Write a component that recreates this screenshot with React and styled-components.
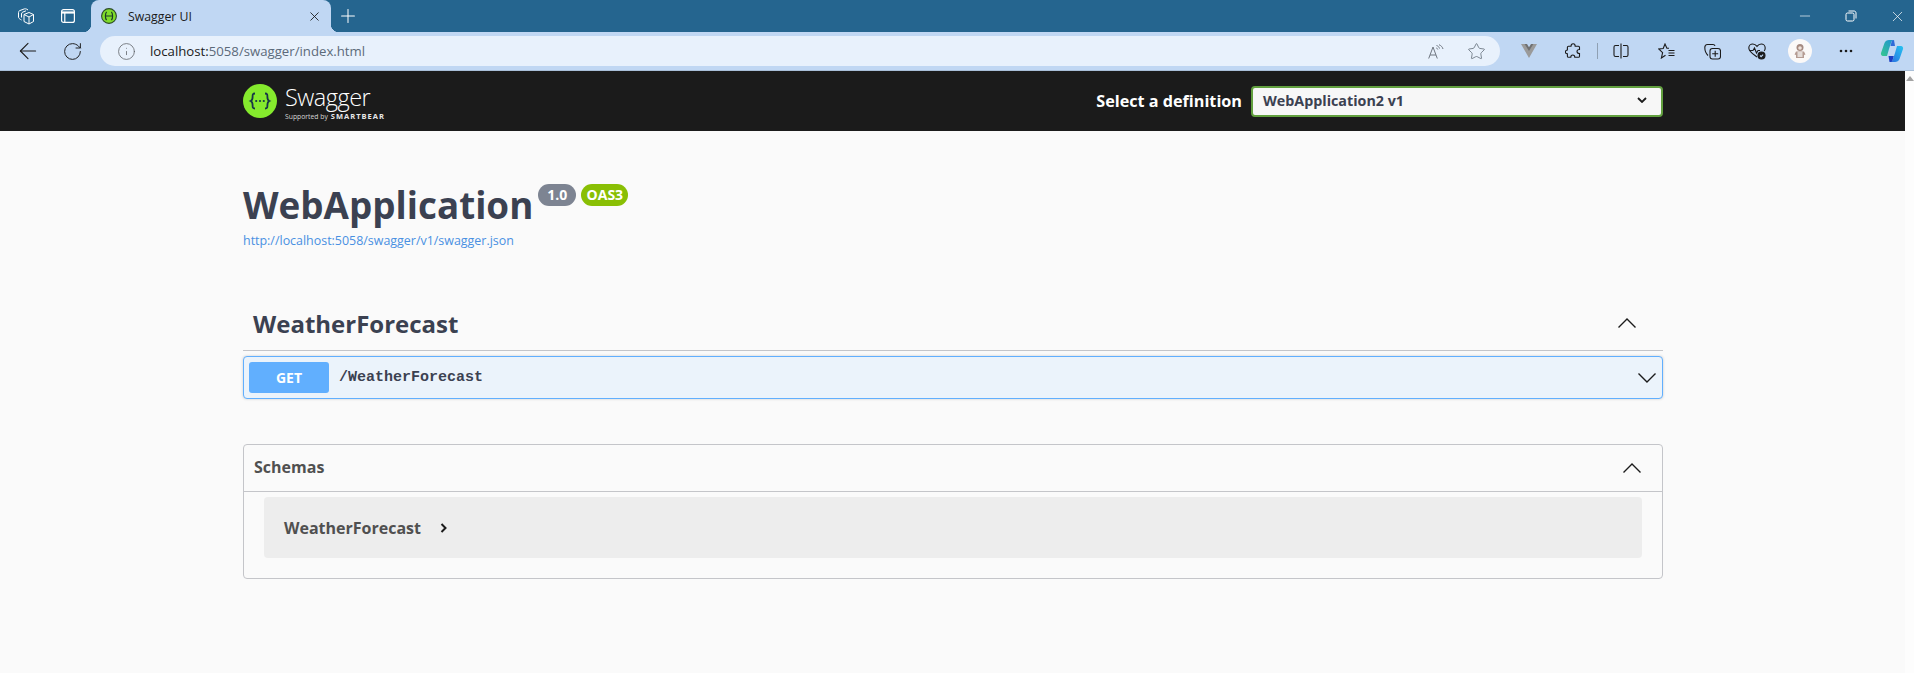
import React from 'react';
import styled, { createGlobalStyle } from 'styled-components';
import { ArrowLeft, RotateCw, Info, Star, X, Plus, Minus } from 'lucide-react';

const GlobalStyle = createGlobalStyle`
  html, body { margin: 0; padding: 0; background: #fafafa; overflow: hidden; }
  * { box-sizing: border-box; }
  body { font-family: "Open Sans", "Noto Sans", sans-serif; }
`;

const Window = styled.div`
  width: 1914px;
  height: 673px;
  display: flex;
  flex-direction: column;
  overflow: hidden;
`;

const TabStrip = styled.div`
  height: 32px;
  background: #25658f;
  display: flex;
  align-items: stretch;
  color: #fff;
`;

const StripSlot = styled.div`
  width: ${({ $w }) => $w}px;
  flex: none;
  display: flex;
  align-items: center;
  justify-content: center;
`;

const Tab = styled.div`
  position: relative;
  width: 240px;
  flex: none;
  background: #c0d7f3;
  border-radius: 8px 8px 0 0;
  display: flex;
  align-items: center;
  padding: 0 9px 0 10px;
  color: #1b1b1b;
  font-size: 12.3px;

  &::before, &::after {
    content: '';
    position: absolute;
    bottom: 0;
    width: 8px;
    height: 8px;
  }
  &::before { left: -8px; background: radial-gradient(circle at 0 0, #25658f 8px, #c0d7f3 8.5px); }
  &::after { right: -8px; background: radial-gradient(circle at 100% 0, #25658f 8px, #c0d7f3 8.5px); }
`;

const TabTitle = styled.span`
  flex: 1;
  margin-left: 11px;
  white-space: nowrap;
`;

const Spacer = styled.div`
  flex: 1;
`;

const Toolbar = styled.div`
  height: 39px;
  background: #c0d7f3;
  border-bottom: 1px solid #a9bfd8;
  display: flex;
  align-items: center;
  flex: none;
`;

const AddressBar = styled.div`
  width: 1400px;
  height: 30px;
  flex: none;
  background: #e8f1fc;
  border-radius: 15px;
  display: flex;
  align-items: center;
  font-size: 13.2px;
  color: #5c6a7a;
`;

const AddressHost = styled.span`
  color: #1b1b1b;
`;

const AddressUrl = styled.div`
  flex: 1;
  white-space: nowrap;
  margin-left: -2px;
`;

const Separator = styled.div`
  width: 1px;
  height: 16px;
  background: #8fa0b3;
  flex: none;
`;

const Avatar = styled.div`
  width: 24px;
  height: 24px;
  border-radius: 50%;
  background: #fbf9f8;
  display: flex;
  align-items: center;
  justify-content: center;
`;

const Viewport = styled.div`
  flex: 1;
  display: flex;
  min-height: 0;
`;

const Page = styled.div`
  flex: 1;
  min-width: 0;
  background: #fafafa;
`;

const Scrollbar = styled.div`
  width: 9px;
  flex: none;
  background: #fdfdfd;
  display: flex;
  justify-content: center;
  padding-top: 5px;
`;

const TopArrow = styled.div`
  width: 0;
  height: 0;
  border-left: 4px solid transparent;
  border-right: 4px solid transparent;
  border-bottom: 5px solid #a3a3a3;
`;

const Topbar = styled.header`
  height: 60px;
  background: #1b1b1b;
  padding: 0 242px 0 243px;
  display: flex;
  align-items: center;
  justify-content: space-between;
`;

const Logo = styled.div`
  display: flex;
  align-items: center;
  gap: 8px;
  color: #fff;
`;

const LogoText = styled.div`
  display: flex;
  flex-direction: column;
  padding-top: 1px;
`;

const LogoName = styled.span`
  font-size: 23.5px;
  font-weight: 300;
  line-height: 30px;
  letter-spacing: -0.5px;
`;

const LogoSupport = styled.span`
  display: flex;
  align-items: baseline;
  gap: 3px;
  font-size: 6.8px;
  line-height: 9px;
  white-space: nowrap;
  color: #d6d6d6;
`;

const LogoBear = styled.b`
  font-size: 7.5px;
  letter-spacing: 1px;
  color: #e8e8e8;
`;

const Definition = styled.div`
  display: flex;
  align-items: center;
  gap: 9px;
`;

const DefinitionLabel = styled.span`
  color: #fff;
  font-size: 16.2px;
  font-weight: 700;
`;

const SelectBox = styled.div`
  width: 412px;
  height: 31px;
  border: 2px solid #62a03f;
  border-radius: 4px;
  background: #f7f7f7;
  color: #3b4151;
  font-size: 14.3px;
  font-weight: 700;
  display: flex;
  align-items: center;
  justify-content: space-between;
  padding: 0 14px 2px 10px;
`;

const Content = styled.main`
  padding: 0 242px 0 243px;
`;

const InfoBlock = styled.section`
  padding-top: 50px;
`;

const TitleRow = styled.div`
  display: flex;
  align-items: flex-start;
`;

const Title = styled.h1`
  margin: 0;
  font-size: 36.8px;
  font-weight: 700;
  line-height: 49px;
  color: #3b4151;
`;

const Badge = styled.span`
  height: 22px;
  margin: 3px 0 0 ${({ $gap }) => $gap}px;
  width: ${({ $w }) => $w}px;
  text-align: center;
  border-radius: 11px;
  background: ${({ $bg }) => $bg};
  color: #fff;
  font-size: 14px;
  font-weight: 700;
  line-height: 22px;
`;

const SpecLink = styled.a`
  display: block;
  margin-top: 3px;
  font-size: 12.45px;
  line-height: 16px;
  color: #4990e2;
`;

const TagHeader = styled.div`
  margin-top: 46px;
  height: 56px;
  padding: 0 27px 0 10px;
  border-bottom: 1px solid #c4c5c9;
  display: flex;
  align-items: center;
  justify-content: space-between;
`;

const TagName = styled.h3`
  margin: 2px 0 0;
  font-size: 24px;
  font-weight: 700;
  color: #3b4151;
`;

const Operation = styled.div`
  margin-top: 5px;
  height: 43px;
  border: 1px solid #61affe;
  border-radius: 4px;
  background: #ebf3fb;
  box-shadow: 0 0 3px rgba(0, 0, 0, 0.19);
  padding: 5px 6px 5px 5px;
  display: flex;
  align-items: center;
`;

const Method = styled.span`
  width: 80px;
  height: 31px;
  border-radius: 3px;
  background: #61affe;
  color: #fff;
  font-size: 14px;
  font-weight: 700;
  display: flex;
  align-items: center;
  justify-content: center;
`;

const OperationPath = styled.span`
  flex: 1;
  margin-left: 10px;
  font-family: "Liberation Mono", monospace;
  font-size: 15px;
  font-weight: 700;
  color: #3b4151;
`;

const SchemaSection = styled.section`
  margin-top: 45px;
  height: 135px;
  border: 1px solid #c4c5c9;
  border-radius: 4px;
`;

const SchemaHeader = styled.div`
  height: 47px;
  padding: 0 21px 0 10px;
  border-bottom: 1px solid #c4c5c9;
  display: flex;
  align-items: center;
  justify-content: space-between;
`;

const SchemaTitle = styled.h4`
  margin: 0 0 3px;
  font-size: 16px;
  font-weight: 700;
  color: #505050;
`;

const SchemaBody = styled.div`
  padding: 5px 20px 15px;
`;

const SchemaRow = styled.div`
  height: 61px;
  border-radius: 4px;
  background: #ededed;
  padding: 0 20px;
  display: flex;
  align-items: center;
  gap: 19px;
  font-size: 16px;
  font-weight: 700;
  color: #505050;
`;

// section arrows, drawn tight to their box so padding lines up
const BigChevron = ({ up }) => (
  <svg width="18" height="10" viewBox="0 0 18 10" fill="none" stroke="#1b1b1b" strokeWidth="1.4">
    <path d={up ? 'M.5 9.500L9 1l8.500 8.500' : 'M.5.5L9 9l8.500-8.500'} />
  </svg>
);

const Workspaces = () => (
  <svg width="18" height="18" viewBox="0 0 18 18" fill="none" stroke="#fff" strokeWidth="1">
    <path d="M7 7.500l5-2 4.500 2v7l-4.500 2.500-5-2.500z" />
    <path d="M12 17v-7l4.500-2.500M7 7.500l5 2.500" />
    <path d="M4.500 13l-1-.5c-1-.6-2-1.500-2-2.500V5.500c0-1 .6-1.700 1.500-2l4-1.500c1-.4 2-.2 3 .3l1 .7" />
    <path d="M4.500 10.500V7c0-1 .5-1.500 1.300-1.900L9 3.800" />
  </svg>
);

const TabActions = () => (
  <svg width="16" height="16" viewBox="0 0 16 16" fill="none" stroke="#fff" strokeWidth="1.2">
    <rect x="1.600" y="1.600" width="12.800" height="12.800" rx="2" />
    <path d="M2 4.500h12" strokeWidth="2.200" />
    <path d="M4.800 5v9" />
  </svg>
);

const Favicon = () => (
  <svg width="16" height="16" viewBox="0 0 16 16">
    <circle cx="8" cy="8" r="7.400" fill="#7fdc2b" stroke="#2d4a2b" strokeWidth="1.100" />
    <path d="M5.600 3.800C4 5.600 4 10.400 5.600 12.200M10.400 3.800c1.600 1.800 1.600 6.600 0 8.400M5 8h6" fill="none" stroke="#1c3a2a" strokeWidth="1.200" />
  </svg>
);

const SwaggerMark = () => (
  <svg width="34" height="34" viewBox="0 0 34 34">
    <circle cx="17" cy="17" r="17" fill="#85ea2d" />
    <path
      d="M12 9.500c-2.600 0-2.400 1.600-2.400 3.400 0 2-.4 3.400-1.900 4.100 1.500.7 1.900 2.100 1.900 4.100 0 1.800-.2 3.400 2.400 3.400M22 9.500c2.600 0 2.400 1.600 2.400 3.400 0 2 .4 3.400 1.900 4.100-1.500.7-1.900 2.100-1.900 4.100 0 1.800.2 3.400-2.400 3.400"
      fill="none"
      stroke="#173647"
      strokeWidth="1.800"
    />
    <circle cx="13.200" cy="17" r="1.100" fill="#173647" />
    <circle cx="17" cy="17" r="1.100" fill="#173647" />
    <circle cx="20.800" cy="17" r="1.100" fill="#173647" />
  </svg>
);

const ReadAloud = () => (
  <svg width="16" height="15" viewBox="0 0 16 15" fill="none" stroke="#6f7680" strokeWidth="1">
    <path d="M.7 14.500L5 3l4.300 11.500M2 11h6" />
    <path d="M8.500 1.500c1.500.4 2.600 1.500 3 3M8.300 4c.8.2 1.300.7 1.500 1.500M11 .7c2.200.9 3.500 2.400 4 4.300" />
  </svg>
);

const VueMark = () => (
  <svg width="16" height="14" viewBox="0 0 16 14">
    <path d="M0 0h4.600L8 5.400 11.400 0H16L8 14z" fill="#9a9a9a" />
    <path d="M3.600 0h2.400L8 3.200 10 0h2.400L8 7z" fill="#6f7072" />
  </svg>
);

const Puzzle = () => (
  <svg width="16" height="16" viewBox="0 0 16 16" fill="none" stroke="#1b1b1b" strokeWidth="1.100">
    <path d="M6 3.200C6 1.600 7 .8 8.200.8s2 .9 2 2.400h3.200c.7 0 1.100.4 1.100 1.100v2.200c-1.400 0-2.500.7-2.500 2s1.100 2 2.500 2v2.700c0 .7-.4 1.100-1.100 1.100H9.800c0-1.300-.7-2.300-2-2.300s-2 1-2 2.300H3.500c-.7 0-1.100-.4-1.100-1.100v-2.400c-1.300 0-2-.8-2-1.900s.7-1.900 2-1.900V4.300c0-.7.4-1.100 1.100-1.100z" />
  </svg>
);

const SplitScreen = () => (
  <svg width="16" height="16" viewBox="0 0 16 16" fill="none" stroke="#1b1b1b" strokeWidth="1.100">
    <path d="M6 2.500H2.500c-.9 0-1.500.6-1.500 1.500v8c0 .9.6 1.500 1.500 1.500H6M10 2.500h3.500c.9 0 1.500.6 1.500 1.500v8c0 .9-.6 1.500-1.500 1.500H10M8 .5v15" />
  </svg>
);

const Favorites = () => (
  <svg width="17" height="16" viewBox="0 0 17 16" fill="none" stroke="#1b1b1b" strokeWidth="1.100">
    <path d="M7.500 12.200L3.400 15l1.200-5.400L.8 6l4.400-.5L7 1l1.900 4.200 2.100.1" />
    <path d="M10.500 7.500h6M10.500 10h6M10.500 12.500h6" />
  </svg>
);

const Collections = () => (
  <svg width="17" height="17" viewBox="0 0 17 17" fill="none" stroke="#1b1b1b" strokeWidth="1.100">
    <path d="M4 12.500C2.500 11 .8 7 .8 4.500 .8 2.500 2 1.500 3.500 1.500H9c1 0 1.800.6 2 1.500" />
    <rect x="6" y="5.500" width="10.500" height="10.500" rx="2.500" />
    <path d="M11.200 7.800v6M8.200 10.800h6" />
  </svg>
);

const Health = () => (
  <svg width="18" height="17" viewBox="0 0 18 17" fill="none" stroke="#1b1b1b" strokeWidth="1.100">
    <path d="M9 14C5 11 .8 8.500.8 5 .8 2.800 2.600 1 4.800 1 6.400 1 8 2 9 3.300 10 2 11.600 1 13.200 1c2.200 0 4 1.800 4 4 0 1.200-.4 2.200-1 3" />
    <path d="M1.500 7.500h3.500l1.500-2.500 2 5 1.500-2.500h2" />
    <circle cx="13.500" cy="12.500" r="3.500" fill="#1b1b1b" />
    <path d="M12 12.500l1.100 1.100 2-2" stroke="#c0d7f3" />
  </svg>
);

const AvatarFigure = () => (
  <svg width="14" height="16" viewBox="0 0 14 16">
    <circle cx="7" cy="4.500" r="3.500" fill="#a58a80" />
    <circle cx="7" cy="5" r="1.800" fill="#efe2da" />
    <path d="M3 8.500h8l1.500 3-1.500.5v3H3v-3l-1.500-.5z" fill="#b59c93" />
    <rect x="4.500" y="9" width="5" height="5" fill="#e4dcd8" />
  </svg>
);

const Copilot = () => (
  <svg width="24" height="24" viewBox="0 0 24 24">
    <defs>
      <linearGradient id="cpA" x1="0" y1="1" x2="1" y2="0">
        <stop offset="0" stopColor="#37c98c" />
        <stop offset="1" stopColor="#1c8fd8" />
      </linearGradient>
      <linearGradient id="cpB" x1="0" y1="1" x2="1" y2="0">
        <stop offset="0" stopColor="#2a6fe0" />
        <stop offset="1" stopColor="#25c4f0" />
      </linearGradient>
    </defs>
    <path d="M9 1h5l-2.500 1.500L9 10l-2 7H3c-1.500 0-2.500-1.500-2-3L4.500 4C5.200 2 7 1 9 1z" fill="url(#cpA)" />
    <path d="M15 23h-5l2.500-1.500L15 14l2-7h4c1.500 0 2.500 1.500 2 3l-3.500 10c-.7 2-2.500 3-4.500 3z" fill="url(#cpB)" />
    <path d="M8.500 17h5.300l-1.300 4.500c-.3.9-1 1.500-2 1.500H9.500z" fill="#1d3fc4" />
    <path d="M15 7H10.500l1-4c.3-1 1-2 2.500-2z" fill="#2e6ad8" />
  </svg>
);

const toolbarRight = [
  { w: 42, node: <VueMark /> },
  { w: 46, node: <Puzzle /> },
  { w: 2, node: <Separator /> },
  { w: 46, node: <SplitScreen /> },
  { w: 44, node: <Favorites /> },
  { w: 48, node: <Collections /> },
  { w: 42, node: <Health /> },
  { w: 44, node: <Avatar><AvatarFigure /></Avatar> },
  { w: 48, node: <svg width="14" height="4" viewBox="0 0 14 4" fill="#1b1b1b"><circle cx="2" cy="2" r="1.300" /><circle cx="7" cy="2" r="1.300" /><circle cx="12" cy="2" r="1.300" /></svg> },
  { w: 44, node: <Copilot /> },
];

export default function App() {
  return (
    <Window>
      <GlobalStyle />
      <TabStrip>
        <StripSlot $w={52}><Workspaces /></StripSlot>
        <StripSlot $w={32}><TabActions /></StripSlot>
        <StripSlot $w={7} />
        <Tab>
          <Favicon />
          <TabTitle>Swagger UI</TabTitle>
          <X size={15} strokeWidth={1.4} />
        </Tab>
        <StripSlot $w={34}><Plus size={22} strokeWidth={1.1} /></StripSlot>
        <Spacer />
        <StripSlot $w={34}><Minus size={16} strokeWidth={1} /></StripSlot>
        <StripSlot $w={58}>
          <svg width="12" height="12" viewBox="0 0 12 12" fill="none" stroke="#fff" strokeWidth="1">
            <rect x="1" y="3" width="8" height="8" rx="1.500" />
            <path d="M3.500 1h5.500c1.200 0 2 .8 2 2v5.500" />
          </svg>
        </StripSlot>
        <StripSlot $w={34}><X size={17} strokeWidth={1} /></StripSlot>
      </TabStrip>
      <Toolbar>
        <StripSlot $w={56}><ArrowLeft size={26} strokeWidth={1} color="#1b1b1b" /></StripSlot>
        <StripSlot $w={32}><RotateCw size={21} strokeWidth={1.1} color="#1b1b1b" /></StripSlot>
        <StripSlot $w={12} />
        <AddressBar>
          <StripSlot $w={52}><Info size={19} strokeWidth={1} color="#5f6368" /></StripSlot>
          <AddressUrl><AddressHost>localhost:</AddressHost>5058/swagger/index.html</AddressUrl>
          <StripSlot $w={38}><ReadAloud /></StripSlot>
          <StripSlot $w={42}><Star size={19} strokeWidth={1} color="#5f6a76" /></StripSlot>
          <StripSlot $w={3} />
        </AddressBar>
        <StripSlot $w={8} />
        {toolbarRight.map((item, i) => (
          <StripSlot key={i} $w={item.w}>{item.node}</StripSlot>
        ))}
      </Toolbar>
      <Viewport>
        <Page>
          <Topbar>
            <Logo>
              <SwaggerMark />
              <LogoText>
                <LogoName>Swagger</LogoName>
                <LogoSupport>Supported by <LogoBear>SMARTBEAR</LogoBear></LogoSupport>
              </LogoText>
            </Logo>
            <Definition>
              <DefinitionLabel>Select a definition</DefinitionLabel>
              <SelectBox>
                WebApplication2 v1
                <svg width="10" height="6" viewBox="0 0 10 6" fill="none" stroke="#1b1b1b" strokeWidth="1.800">
                  <path d="M1 1l4 4 4-4" />
                </svg>
              </SelectBox>
            </Definition>
          </Topbar>
          <Content>
            <InfoBlock>
              <TitleRow>
                <Title>WebApplication</Title>
                <Badge $gap={5} $w={38} $bg="#7d8492">1.0</Badge>
                <Badge $gap={5} $w={47} $bg="#89bf04">OAS3</Badge>
              </TitleRow>
              <SpecLink>http://localhost:5058/swagger/v1/swagger.json</SpecLink>
            </InfoBlock>
            <TagHeader>
              <TagName>WeatherForecast</TagName>
              <BigChevron up />
            </TagHeader>
            <Operation>
              <Method>GET</Method>
              <OperationPath>/WeatherForecast</OperationPath>
              <BigChevron />
            </Operation>
            <SchemaSection>
              <SchemaHeader>
                <SchemaTitle>Schemas</SchemaTitle>
                <BigChevron up />
              </SchemaHeader>
              <SchemaBody>
                <SchemaRow>
                  WeatherForecast
                  <svg width="7" height="10" viewBox="0 0 7 10" fill="none" stroke="#1b1b1b" strokeWidth="2">
                    <path d="M1.500 1l4 4-4 4" />
                  </svg>
                </SchemaRow>
              </SchemaBody>
            </SchemaSection>
          </Content>
        </Page>
        <Scrollbar><TopArrow /></Scrollbar>
      </Viewport>
    </Window>
  );
}
